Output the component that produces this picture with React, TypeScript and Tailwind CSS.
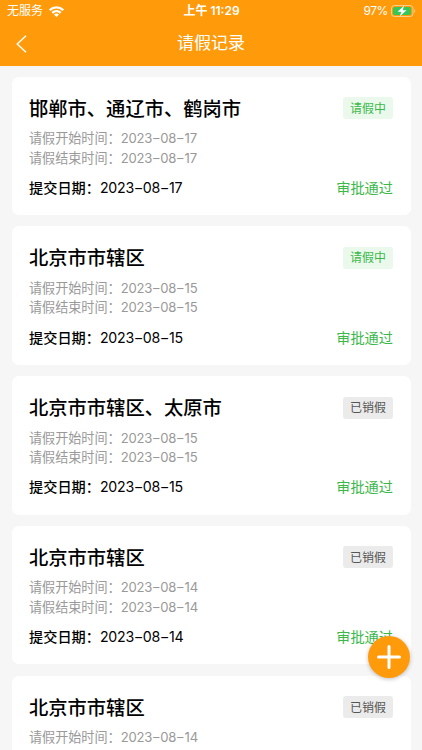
import { Fragment } from "react"

interface LeaveRecord {
  city: string
  start: string
  end: string
  submitted: string
  status: string
  active: boolean
}

const records: LeaveRecord[] = [
  { city: "邯郸市、通辽市、鹤岗市", start: "2023-08-17", end: "2023-08-17", submitted: "2023-08-17", status: "请假中", active: true },
  { city: "北京市市辖区", start: "2023-08-15", end: "2023-08-15", submitted: "2023-08-15", status: "请假中", active: true },
  { city: "北京市市辖区、太原市", start: "2023-08-15", end: "2023-08-15", submitted: "2023-08-15", status: "已销假", active: false },
  { city: "北京市市辖区", start: "2023-08-14", end: "2023-08-14", submitted: "2023-08-14", status: "已销假", active: false },
  { city: "北京市市辖区", start: "2023-08-14", end: "2023-08-14", submitted: "2023-08-14", status: "已销假", active: false },
]

function DateText({ value }: { value: string }) {
  return (
    <span className="tracking-[-0.25px]">
      {value.split("-").map((part, index) => (
        <Fragment key={index}>
          {index > 0 && <span className="inline-block scale-x-[1.5] px-[1.3px]">-</span>}
          {part}
        </Fragment>
      ))}
    </span>
  )
}

function StatusBar() {
  return (
    <div className="grid h-[22px] grid-cols-3 items-center pl-[7px] pr-[6px] text-xs leading-[22px]">
      <div className="flex items-center gap-[6px]">
        <span>无服务</span>
        <svg width="15" height="11" viewBox="0 0 15 11" fill="none" stroke="currentColor" strokeWidth="2.3">
          <path d="M0.8 4.2C4.6 0.5 10.4 0.5 14.2 4.2" />
          <path d="M3.3 6.8C5.7 4.5 9.3 4.5 11.7 6.8" />
          <path d="M7.5 11L5 8.5C6.4 7.3 8.6 7.3 10 8.5Z" fill="currentColor" stroke="none" />
        </svg>
      </div>
      <div className="text-center font-semibold whitespace-nowrap">上午 11:29</div>
      <div className="flex items-center justify-end gap-[3px]">
        <span className="tracking-[-0.4px]">97%</span>
        <svg width="25" height="12" viewBox="0 0 25 12">
          <rect x="0.5" y="0.5" width="21.5" height="11" rx="3" fill="none" stroke="#fff" strokeOpacity="0.5" />
          <rect x="2" y="2" width="18" height="8" rx="1.6" fill="#35c759" />
          <path d="M23.3 4v4c1.3-.5 1.3-3.5 0-4z" fill="#fff" fillOpacity="0.55" />
          <path d="M13.2 0.5L6.6 6.7h3.7L8.8 11.5L15.5 5.2h-3.8z" fill="#fff" />
        </svg>
      </div>
    </div>
  )
}

function RecordCard({ record }: { record: LeaveRecord }) {
  return (
    <div className="h-[138.5px] shrink-0 rounded-[7px] bg-white px-[17.5px] pt-[17.5px]">
      <div className="flex h-[28px] items-center justify-between">
        <h2 className="pt-[2px] text-[19.3px] font-medium text-black">{record.city}</h2>
        <span
          className={`flex h-[22px] w-[50px] items-center justify-center rounded-[3px] pt-px text-xs ${
            record.active ? "bg-[#ebf9ed] text-[#3cb84a]" : "bg-[#ebebeb] text-[#555555]"
          }`}
        >
          {record.status}
        </span>
      </div>
      <div className="mt-[7px] text-[13.1px] leading-[19.5px] text-[#999999]">
        <p>请假开始时间：<DateText value={record.start} /></p>
        <p>请假结束时间：<DateText value={record.end} /></p>
      </div>
      <div className="mt-[8.5px] flex h-[22px] items-center justify-between text-[14.2px]">
        <p className="text-black">
          <span className="font-medium">提交日期：</span>
          <DateText value={record.submitted} />
        </p>
        <span className="text-[#3cb84a]">审批通过</span>
      </div>
    </div>
  )
}

export default function App() {
  return (
    <div className="relative h-[750px] w-[422px] overflow-hidden bg-[#f6f6f6] font-[Inter,'Noto_Sans_CJK_SC',sans-serif]">
      <header className="h-[65.5px] bg-[#ff9b0b] text-white">
        <StatusBar />
        <div className="grid h-[43px] grid-cols-[60px_1fr_60px] items-center">
          <button className="pl-[16px]" aria-label="返回">
            <svg width="11" height="18" viewBox="0 0 11 18" fill="none" stroke="currentColor" strokeWidth="1.4">
              <path d="M10 0.8L1.2 9L10 17.2" />
            </svg>
          </button>
          <h1 className="text-center text-[17px]">请假记录</h1>
        </div>
      </header>

      <main className="flex flex-col gap-[11.25px] px-[11.5px] pt-[11px]">
        {records.map((record, index) => (
          <RecordCard key={index} record={record} />
        ))}
      </main>

      <button
        className="absolute top-[636px] left-[367.5px] flex size-[42px] items-center justify-center rounded-full bg-[#ff9b0b] text-white shadow-[0_1px_4px_rgba(0,0,0,0.25)]"
        aria-label="新增"
      >
        <svg width="24" height="24" viewBox="0 0 24 24" fill="none" stroke="currentColor" strokeWidth="3" strokeLinecap="round">
          <path d="M12 1.5v21M1.5 12h21" />
        </svg>
      </button>
    </div>
  )
}
